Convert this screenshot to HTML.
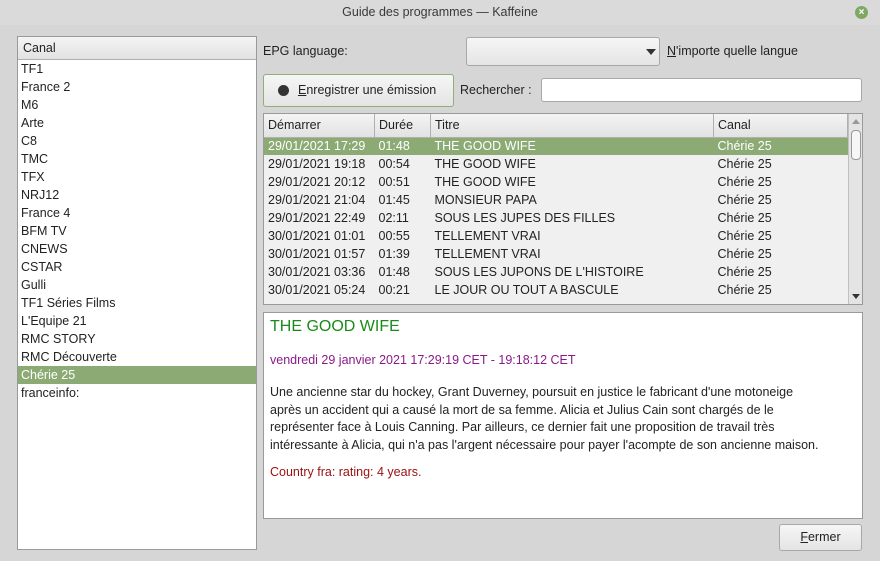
<html><head><style>
body{margin:0;width:880px;height:561px;background:#d6d6d6;font-family:"Liberation Sans","DejaVu Sans",sans-serif;font-size:12.5px;color:#222;position:relative;overflow:hidden}
.a{position:absolute}
.title{left:0;top:0;width:880px;height:25px;background:#dadada;text-align:center;line-height:25px;color:#3a3a3a;font-size:12.5px}
.close{left:855px;top:6px;width:13px;height:13px;border-radius:50%;background:#80a865;color:#fff;font-size:10px;line-height:13px;text-align:center;font-weight:bold}
.list{left:17px;top:36px;width:238px;height:512px;background:#fff;border:1px solid #9a9a9a}
.hdr{background:linear-gradient(#f4f4f4,#e2e2e2);border-bottom:1px solid #b0b0b0;height:22px;line-height:22px;padding-left:5px}
.row{height:18px;line-height:18px;padding-left:3px;white-space:nowrap}
.sel{background:#8cab74;color:#fff}
.btn{border:1px solid #a8a8a8;border-radius:3px;background:linear-gradient(#f6f6f6,#e4e4e4)}
.inp{background:#fff;border:1px solid #a8a8a8;border-radius:3px}
table{border-collapse:collapse;font-size:12.5px}
td{height:18px;padding:0 0 0 4px;white-space:nowrap}
th{font-weight:normal;text-align:left;padding-left:4px;height:23px;background:linear-gradient(#f4f4f4,#e2e2e2);border-right:1px solid #b0b0b0;border-bottom:1px solid #b0b0b0}
</style></head><body>
<div class="a title">Guide des programmes — Kaffeine</div>
<div class="a close">×</div>
<div class="a list"><div class="hdr">Canal</div>
<div class="row">TF1</div><div class="row">France 2</div><div class="row">M6</div><div class="row">Arte</div><div class="row">C8</div><div class="row">TMC</div><div class="row">TFX</div><div class="row">NRJ12</div><div class="row">France 4</div><div class="row">BFM TV</div><div class="row">CNEWS</div><div class="row">CSTAR</div><div class="row">Gulli</div><div class="row">TF1 Séries Films</div><div class="row">L'Equipe 21</div><div class="row">RMC STORY</div><div class="row">RMC Découverte</div><div class="row sel">Chérie 25</div><div class="row">franceinfo:</div>
</div>
<div class="a" style="left:263px;top:44px">EPG language:</div>
<div class="a btn" style="left:466px;top:37px;width:192px;height:27px"><div class="a" style="left:179px;top:11px;border:5px solid transparent;border-top:6px solid #333;border-bottom:0"></div></div>
<div class="a" style="left:667px;top:44px"><u>N</u>'importe quelle langue</div>
<div class="a btn" style="left:263px;top:74px;width:189px;height:31px;border-color:#8fae78"><div class="a" style="left:14px;top:10px;width:11px;height:11px;border-radius:50%;background:#333"></div><div class="a" style="left:34px;top:8px"><u>E</u>nregistrer une émission</div></div>
<div class="a" style="left:460px;top:83px">Rechercher :</div>
<div class="a inp" style="left:541px;top:78px;width:319px;height:22px"></div>
<div class="a" style="left:263px;top:113px;width:598px;height:190px;background:#f0f0f0;border:1px solid #9a9a9a;overflow:hidden">
<table style="width:584px">
<tr><th style="width:105px">Démarrer</th><th style="width:50px">Durée</th><th style="width:277px">Titre</th><th>Canal</th></tr>
<tr class="sel"><td>29/01/2021 17:29</td><td>01:48</td><td>THE GOOD WIFE</td><td>Chérie 25</td></tr>
<tr><td>29/01/2021 19:18</td><td>00:54</td><td>THE GOOD WIFE</td><td>Chérie 25</td></tr>
<tr><td>29/01/2021 20:12</td><td>00:51</td><td>THE GOOD WIFE</td><td>Chérie 25</td></tr>
<tr><td>29/01/2021 21:04</td><td>01:45</td><td>MONSIEUR PAPA</td><td>Chérie 25</td></tr>
<tr><td>29/01/2021 22:49</td><td>02:11</td><td>SOUS LES JUPES DES FILLES</td><td>Chérie 25</td></tr>
<tr><td>30/01/2021 01:01</td><td>00:55</td><td>TELLEMENT VRAI</td><td>Chérie 25</td></tr>
<tr><td>30/01/2021 01:57</td><td>01:39</td><td>TELLEMENT VRAI</td><td>Chérie 25</td></tr>
<tr><td>30/01/2021 03:36</td><td>01:48</td><td>SOUS LES JUPONS DE L'HISTOIRE</td><td>Chérie 25</td></tr>
<tr><td>30/01/2021 05:24</td><td>00:21</td><td>LE JOUR OU TOUT A BASCULE</td><td>Chérie 25</td></tr>
</table>
<div class="a" style="left:584px;top:0;width:14px;height:190px;background:#e4e4e4;border-left:1px solid #c0c0c0"><div class="a" style="left:3px;top:5px;border:4px solid transparent;border-bottom:5px solid #999;border-top:0"></div><div class="a" style="left:2px;top:16px;width:8px;height:28px;border:1px solid #999;border-radius:4px;background:#f6f6f6"></div><div class="a" style="left:3px;top:180px;border:4px solid transparent;border-top:5px solid #333;border-bottom:0"></div></div>
</div>
<div class="a" style="left:263px;top:312px;width:598px;height:205px;background:#fff;border:1px solid #9a9a9a">
<div class="a" style="left:6px;top:5px;color:#1a8a1a;font-size:16px">THE GOOD WIFE</div>
<div class="a" style="left:6px;top:40px;color:#8a1a8a">vendredi 29 janvier 2021 17:29:19 CET - 19:18:12 CET</div>
<div class="a" style="left:6px;top:71px;white-space:nowrap;line-height:17.5px">Une ancienne star du hockey, Grant Duverney, poursuit en justice le fabricant d'une motoneige<br>après un accident qui a causé la mort de sa femme. Alicia et Julius Cain sont chargés de le<br>représenter face à Louis Canning. Par ailleurs, ce dernier fait une proposition de travail très<br>intéressante à Alicia, qui n'a pas l'argent nécessaire pour payer l'acompte de son ancienne maison.</div>
<div class="a" style="left:6px;top:152px;color:#9a1010">Country fra: rating: 4 years.</div>
</div>
<div class="a btn" style="left:779px;top:524px;width:81px;height:25px;line-height:25px;text-align:center"><u>F</u>ermer</div>
</body></html>
